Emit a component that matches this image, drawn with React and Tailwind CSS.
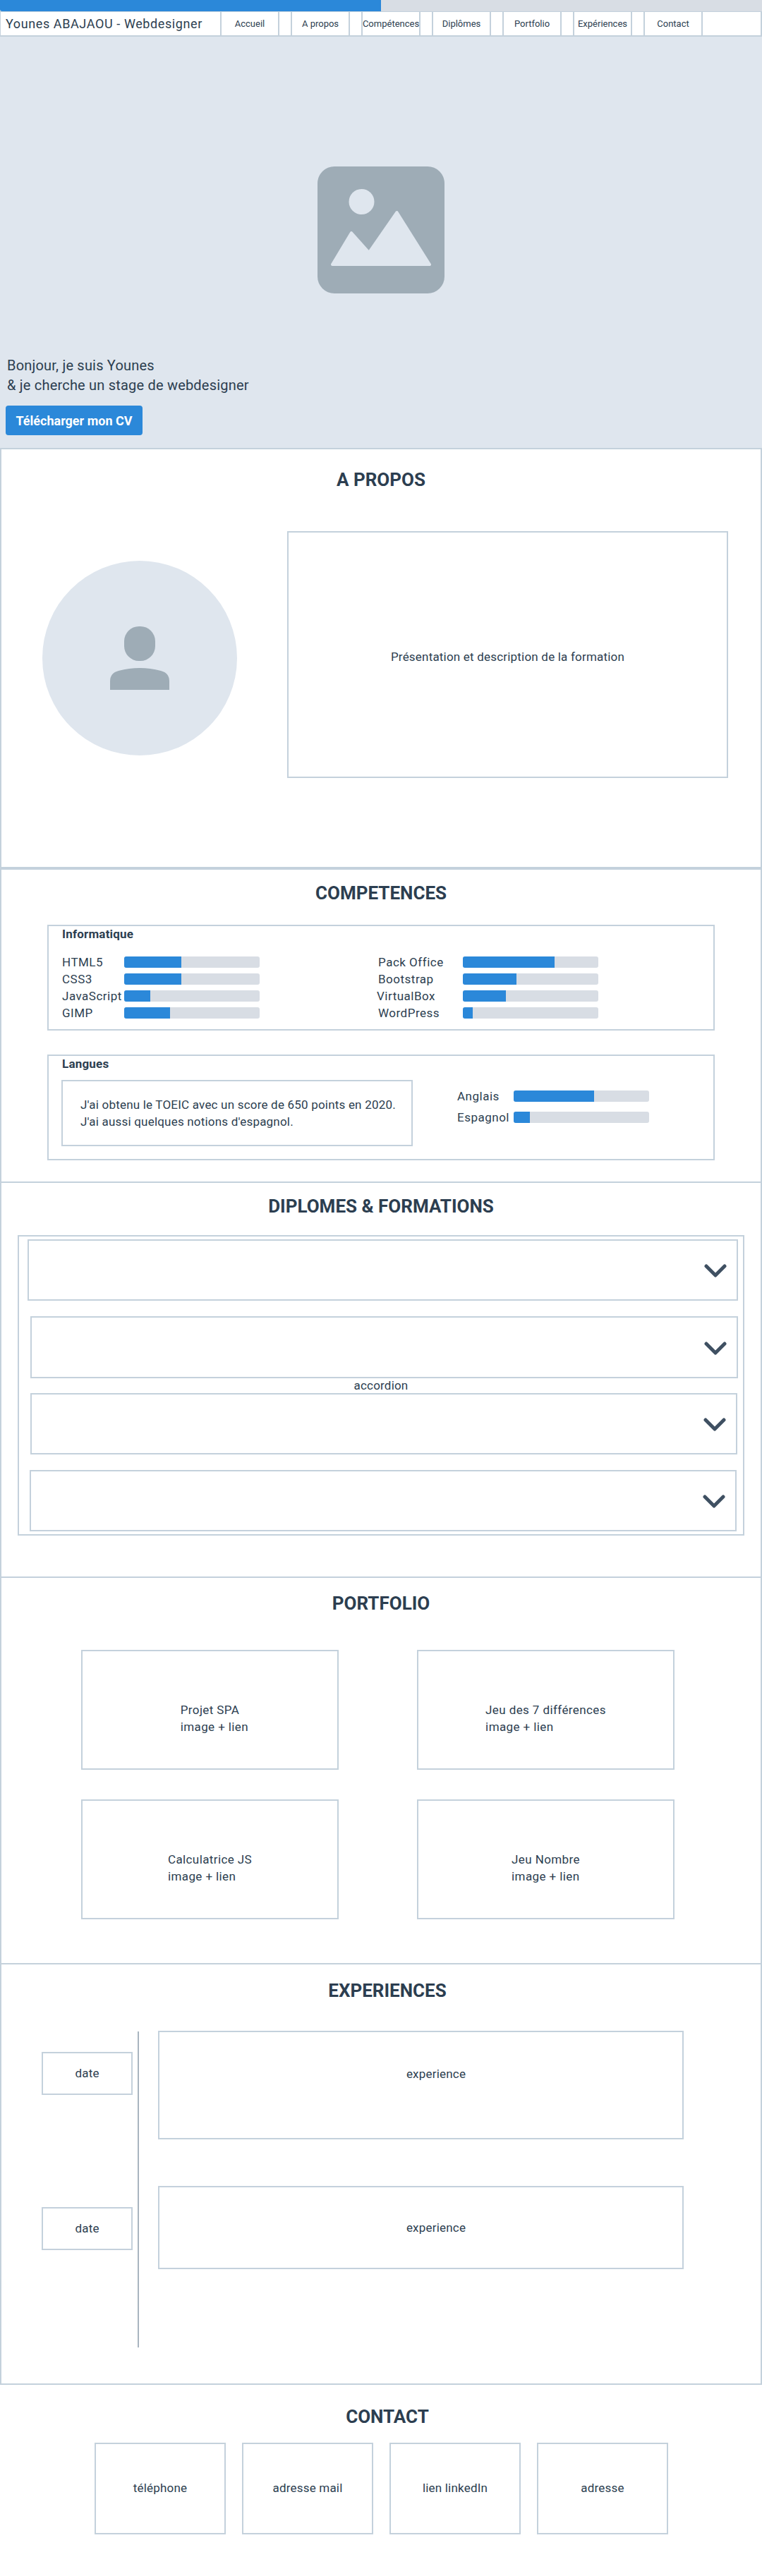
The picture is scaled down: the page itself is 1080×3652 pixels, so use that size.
import React from "react";

const line = "border-[#c4d1dc]";
const Title = ({ children, className = "" }) => (
  <h2 className={`text-center text-[26px] leading-[34px] font-bold tracking-normal text-[#2c3e50] ${className}`}>{children}</h2>
);
const Bar = ({ fill }) => (
  <div className="h-4 w-[192px] shrink-0 overflow-hidden rounded-[3px] bg-[#d8dde4]">
    <div className="h-full bg-[#2b88d9]" style={{ width: fill }} />
  </div>
);
const Skill = ({ label, fill, className = "" }) => (
  <div className="flex h-4 items-center">
    <span className={`w-[88px] shrink-0 whitespace-nowrap text-[17px] leading-4 tracking-[0.5px] ${className}`}>{label}</span>
    <Bar fill={fill} />
  </div>
);
const Chevron = () => (
  <svg width="32" height="20" viewBox="0 0 32 20" fill="none" className="block">
    <path d="M3 3 L16 16 L29 3" stroke="#3f5062" strokeWidth="5" strokeLinecap="round" strokeLinejoin="round" />
  </svg>
);
const Item = ({ className }) => (
  <div className={`flex items-center justify-end border-2 ${line} pr-[14px] pt-[3px] ${className}`}>
    <Chevron />
  </div>
);
const Card = ({ a }) => (
  <div className={`flex h-[170px] items-center justify-center border-2 ${line} pt-6 text-[17px] leading-6 tracking-[0.4px]`}>
    <div>
      <div className="whitespace-nowrap">{a}</div>
      <div className="w-0 whitespace-nowrap">image + lien</div>
    </div>
  </div>
);

export default function App() {
  return (
    <div className="h-[3652px] overflow-hidden bg-white font-[family-name:Roboto] tracking-[0.2px] text-[#2c3e50]">
      <div className="h-4 bg-[#d8dde4]">
        <div className="h-full w-1/2 rounded-bl-[3px] bg-[#2b88d9]" />
      </div>
      <nav className={`flex h-9 border-2 border-l ${line} border-t bg-white`}>
        <div className={`flex w-[311px] items-center whitespace-nowrap pl-[7px] text-[18px] tracking-[0.6px]`}>Younes ABAJAOU - Webdesigner</div>
        <div className="flex gap-4">
          {["Accueil", "A propos", "Compétences", "Diplômes", "Portfolio", "Expériences", "Contact"].map((n) => (
            <a key={n} className={`flex w-[84px] items-center justify-center whitespace-nowrap border-x-2 ${line} text-[13px] tracking-normal`}>{n}</a>
          ))}
        </div>
      </nav>

      <section className="h-[583px] bg-[#dfe6ee] pt-[184px]">
        <svg width="180" height="180" viewBox="0 0 180 180" className="mx-auto block">
          <rect width="180" height="180" rx="24" fill="#9eacb6" />
          <ellipse cx="62.5" cy="50" rx="18" ry="18" fill="#dfe6ee" />
          <path d="M21 139 L48 94 L73 122 L112.5 65 L159 139 Z" fill="#dfe6ee" stroke="#dfe6ee" strokeWidth="4" strokeLinejoin="round" />
        </svg>
        <p className="mt-[88px] pl-[10px] text-[20px] leading-7">Bonjour, je suis Younes<br />&amp; je cherche un stage de webdesigner</p>
        <button className="ml-2 mt-[15px] h-[42px] w-[194px] rounded bg-[#2b88d9] text-[18px] font-bold tracking-normal text-white">Télécharger mon CV</button>
      </section>

      <section className={`h-[596px] border-2 border-b-2 ${line}`}>
        <Title className="mt-[26px]">A PROPOS</Title>
        <div className="mt-[56px] flex items-start">
          <div className="ml-[58px] mt-[42px] flex h-[276px] w-[276px] items-center justify-center rounded-full bg-[#dfe6ee]">
            <svg width="84" height="90" viewBox="0 0 84 90">
              <rect x="20" y="0" width="44" height="49" rx="21" fill="#9eacb6" />
              <path d="M0 90 V78 Q0 66 12 63 Q42 55 72 63 Q84 66 84 78 V90 Z" fill="#9eacb6" />
            </svg>
          </div>
          <div className={`ml-[71px] flex h-[350px] w-[625px] items-center justify-center border-2 ${line} pt-[7px] text-[17px]`}>
            Présentation et description de la formation
          </div>
        </div>
      </section>

      <section className={`h-[444px] border-x-2 border-t-2 ${line}`}>
        <Title className="mt-4">COMPETENCES</Title>
        <div className={`ml-[65px] mt-7 h-[150px] w-[946px] border-2 ${line} pl-[19px]`}>
          <h3 className="text-[17px] font-bold leading-[22px]">Informatique</h3>
          <div className="mt-[21px] grid grid-cols-[448px_1fr] gap-y-2">
            <Skill label="HTML5" fill="81px" />
            <Skill label="Pack Office" fill="130px" className="w-[120px]" />
            <Skill label="CSS3" fill="81px" />
            <Skill label="Bootstrap" fill="76px" className="w-[120px]" />
            <Skill label="JavaScript" fill="37px" />
            <Skill label="VirtualBox" fill="61px" className="-ml-[2px] w-[122px]" />
            <Skill label="GIMP" fill="65px" />
            <Skill label="WordPress" fill="14px" className="w-[120px]" />
          </div>
        </div>
        <div className={`ml-[65px] mt-[34px] h-[150px] w-[946px] border-2 ${line} pl-[18px]`}>
          <h3 className="pl-px text-[17px] font-bold leading-[22px]">Langues</h3>
          <div className="mt-3 flex items-start">
            <div className={`h-[94px] w-[498px] border-2 ${line} pl-[25px] pt-[21px] text-[17px] leading-6`}>
              J'ai obtenu le TOEIC avec un score de 650 points en 2020.<br />J'ai aussi quelques notions d'espagnol.
            </div>
            <div className="ml-[63px] mt-[15px] flex flex-col gap-[14px]">
              <div className="flex h-4 items-center"><span className="w-20 text-[17px] leading-4 tracking-[0.5px]">Anglais</span><Bar fill="114px" /></div>
              <div className="flex h-4 items-center"><span className="w-20 text-[17px] leading-4 tracking-[0.5px]">Espagnol</span><Bar fill="23px" /></div>
            </div>
          </div>
        </div>
      </section>

      <section className={`h-[560px] border-x-2 border-t-2 ${line}`}>
        <Title className="mt-4">DIPLOMES &amp; FORMATIONS</Title>
        <div className={`ml-[23px] mt-6 h-[426px] w-[1030px] border-2 ${line} pt-1`}>
          <Item className="ml-3 h-[87px] w-[1007px]" />
          <Item className="ml-4 mt-[22px] h-[88px] w-[1003px]" />
          <p className="h-[21px] text-center text-[17px] leading-[21px]">accordion</p>
          <Item className="ml-4 h-[87px] w-[1002px]" />
          <Item className="ml-[15px] mt-[22px] h-[87px] w-[1002px]" />
        </div>
      </section>

      <section className={`h-[548px] border-x-2 border-t-2 ${line}`}>
        <Title className="mt-[19px]">PORTFOLIO</Title>
        <div className="ml-[113px] mt-[49px] grid w-[841px] grid-cols-[365px_365px] gap-x-[111px] gap-y-[42px]">
          <Card a="Projet SPA" />
          <Card a="Jeu des 7 différences" />
          <Card a="Calculatrice JS" />
          <Card a="Jeu Nombre" />
        </div>
      </section>

      <section className={`h-[598px] border-2 ${line}`}>
        <Title className="mt-5 pl-[18px]">EXPERIENCES</Title>
        <div className="mt-10 flex items-start">
          <div className="ml-[57px] w-[129px] pt-[30px] text-[17px]">
            <div className={`flex h-[61px] items-center justify-center border-2 ${line}`}>date</div>
            <div className={`mt-[159px] flex h-[61px] items-center justify-center border-2 ${line}`}>date</div>
          </div>
          <div className="ml-[7px] mt-px h-[448px] w-0.5 bg-[#a9b5bf]" />
          <div className="ml-[27px] w-[745px] text-[17px] leading-6">
            <div className={`h-[154px] border-2 ${line} pl-[43px] pt-[47px] text-center`}>experience</div>
            <div className={`mt-[66px] h-[118px] border-2 ${line} pl-[43px] pt-[45px] text-center`}>experience</div>
          </div>
        </div>
      </section>

      <section>
        <Title className="mt-7 pl-[18px]">CONTACT</Title>
        <div className="ml-[134px] mt-5 flex gap-[23px] text-[17px]">
          {["téléphone", "adresse mail", "lien linkedIn", "adresse"].map((c) => (
            <div key={c} className={`flex h-[130px] w-[186px] items-center justify-center border-2 ${line}`}>{c}</div>
          ))}
        </div>
      </section>
    </div>
  );
}
